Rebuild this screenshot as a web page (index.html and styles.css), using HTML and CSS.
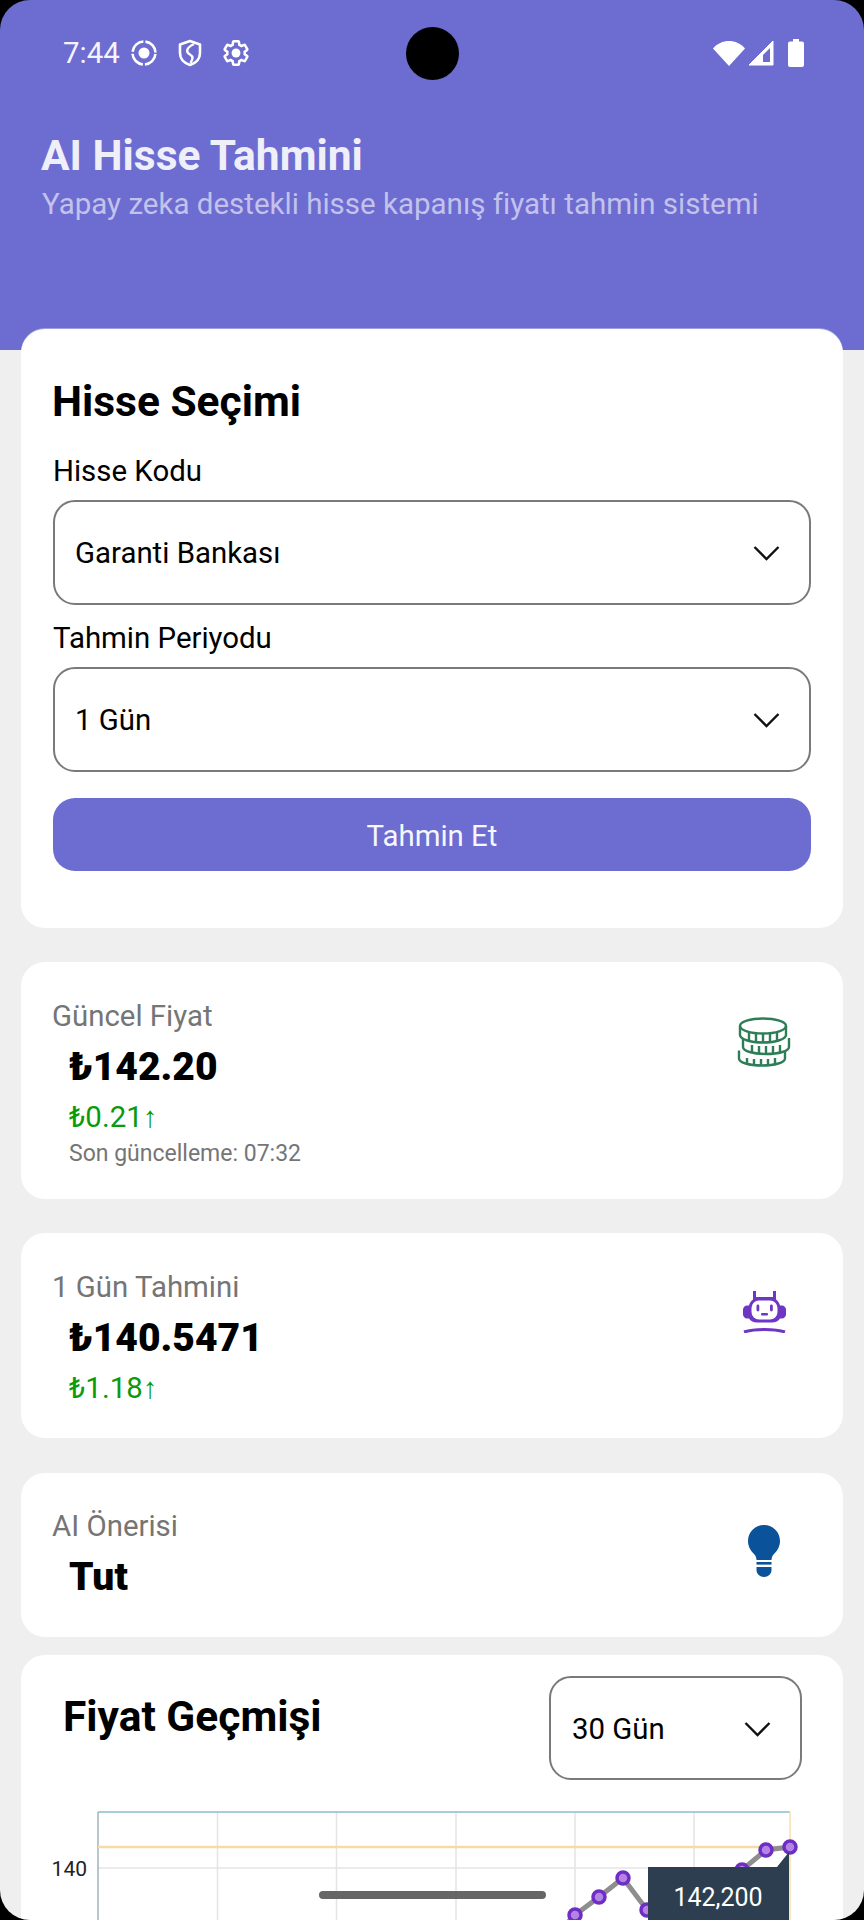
FILE: index.html
```html
<!DOCTYPE html>
<html lang="tr">
  <head>
    <meta charset="UTF-8" />
    <title>AI Hisse Tahmini</title>
    <link rel="stylesheet" href="styles.css">
  </head>
  <body>
    <div id="screen">
      <header class="top">
        <div class="status-bar">
          <div class="status-left">
            <span class="clock">7:44</span>
            <svg class="st-icon" viewBox="0 0 28 28"><circle cx="14" cy="14" r="5.500" fill="#fff"/><circle cx="14" cy="14" r="11.500" fill="none" stroke="#fff" stroke-width="2.600" stroke-dasharray="16 2.100" stroke-dashoffset="-1"/></svg>
            <svg class="st-icon shield" viewBox="0 0 28 28"><path d="M14 2 4 5.500V14c0 5.500 4 10 10 12 6-2 10-6.500 10-12V5.500z" fill="none" stroke="#fff" stroke-width="2.600" stroke-linejoin="round"/><path d="M18 5C10 9 9.500 13 14 15.500c3.500 2 3 4.500.5 8.500" fill="none" stroke="#fff" stroke-width="2.400"/></svg>
            <svg class="st-icon gear" viewBox="0 0 24 24"><path d="M19.430 12.980c.04-.32.07-.64.07-.98 0-.34-.03-.66-.07-.98l2.110-1.650c.19-.15.24-.42.12-.64l-2-3.460c-.09-.16-.26-.25-.44-.25-.06 0-.12.01-.17.03l-2.490 1c-.52-.4-1.080-.73-1.690-.98l-.38-2.650C14.460 2.180 14.250 2 14 2h-4c-.25 0-.46.18-.49.42l-.38 2.650c-.61.25-1.170.59-1.690.98l-2.490-1c-.06-.02-.12-.03-.18-.03-.17 0-.34.09-.43.25l-2 3.460c-.13.22-.07.49.12.64l2.110 1.650c-.04.32-.07.65-.07.98 0 .33.03.66.07.98l-2.110 1.650c-.19.15-.24.42-.12.64l2 3.460c.09.16.26.25.44.25.06 0 .12-.01.17-.03l2.490-1c.52.4 1.080.73 1.690.98l.38 2.650c.03.24.24.42.49.42h4c.25 0 .46-.18.49-.42l.38-2.650c.61-.25 1.170-.59 1.690-.98l2.490 1c.06.02.12.03.18.03.17 0 .34-.09.43-.25l2-3.460c.12-.22.07-.49-.12-.64l-2.110-1.650z" fill="none" stroke="#fff" stroke-width="2.200"/><circle cx="12" cy="12" r="3.800" fill="#fff"/></svg>
          </div>
          <div class="status-right">
            <svg class="wifi" viewBox="0 0 32 26"><path d="M0 8.500C4 3.500 10 1 16 1s12 2.500 16 7.500L16 26z" fill="#fff"/></svg>
            <svg class="signal" viewBox="0 0 26 26"><path d="M25 1v24H1z" fill="#fff" stroke="#fff" stroke-width="1" stroke-linejoin="round"/><path d="M15 15 22 8v14h-7z" fill="#6d6cd0"/></svg>
            <svg class="battery" viewBox="0 0 16 28"><path d="M5 0h6v2.500h3a2 2 0 0 1 2 2V26a2 2 0 0 1-2 2H2a2 2 0 0 1-2-2V4.500a2 2 0 0 1 2-2h3z" fill="#fff"/></svg>
          </div>
        </div>
        <h1 class="app-title">AI Hisse Tahmini</h1>
        <p class="app-sub">Yapay zeka destekli hisse kapanış fiyatı tahmin sistemi</p>
      </header>

      <main class="content">
        <section class="card form-card">
          <h2 class="card-title">Hisse Seçimi</h2>
          <label class="field-label first-label">Hisse Kodu</label>
          <div class="select">
            <span>Garanti Bankası</span>
            <svg class="chevron" viewBox="0 0 28 16"><path d="M2 2l12 12L26 2" fill="none" stroke="#111" stroke-width="2.400"/></svg>
          </div>
          <label class="field-label">Tahmin Periyodu</label>
          <div class="select">
            <span>1 Gün</span>
            <svg class="chevron" viewBox="0 0 28 16"><path d="M2 2l12 12L26 2" fill="none" stroke="#111" stroke-width="2.400"/></svg>
          </div>
          <button class="predict-btn">Tahmin Et</button>
        </section>

        <section class="card stat-card price-card">
          <div class="stat-text">
            <div class="stat-label">Güncel Fiyat</div>
            <div class="stat-value">₺142.20</div>
            <div class="stat-delta">₺0.21↑</div>
            <div class="stat-note">Son güncelleme: 07:32</div>
          </div>
          <svg class="stat-icon coins" viewBox="0 0 54 50" fill="none" stroke="#2e7d56" stroke-width="2.400">
            <path d="M2 33.500v8c0 4 10 7 23 7s23-3 23-7v-8" fill="#fff"/>
            <path d="M6 21v9c0 4 10 7 23 7s23-3 23-7v-9" fill="#fff"/>
            <ellipse cx="26" cy="9" rx="23" ry="7.500" fill="#fff"/>
            <path d="M3 9v9c0 4 10 7.500 23 7.500S49 22 49 18V9"/>
            <path d="M12 15.500v8M19 16.500v9M26 17v8.500M33 16.500v9M40 15.500v8M15 28v7M22 29v8M29 29v8M36 29v8M43 28v7M10 41v6M17 42v6M24 42v6M31 42v6M38 41v6"/>
          </svg>
        </section>

        <section class="card stat-card forecast-card">
          <div class="stat-text">
            <div class="stat-label">1 Gün Tahmini</div>
            <div class="stat-value">₺140.5471</div>
            <div class="stat-delta">₺1.18↑</div>
          </div>
          <svg class="stat-icon robot" viewBox="0 0 43 43">
            <path d="M10 1h3v6h17V1h3v8.500c2 1.500 3.500 3.500 4 6h2c2 0 4 2 4 4v5c0 2-2 4-4 4h-2c-1.500 2.500-4.500 4-8 4H14c-3.500 0-6.500-1.500-8-4H4c-2 0-4-2-4-4v-5c0-2 2-4 4-4h2c.5-2.500 2-4.500 4-6z" fill="#6f36c4"/>
            <rect x="8.500" y="10.500" width="26" height="19" rx="7.500" fill="#fff"/>
            <rect x="13.500" y="14.500" width="2.800" height="7" rx="1.400" fill="#6f36c4"/>
            <rect x="27" y="14.500" width="2.800" height="7" rx="1.400" fill="#6f36c4"/>
            <rect x="18" y="23" width="7" height="2.500" rx="1" fill="#6f36c4"/>
            <path d="M1 42c6-2 13-2.500 20.500-2.500S36 40 42 42" fill="none" stroke="#6f36c4" stroke-width="3"/>
          </svg>
        </section>

        <section class="card stat-card advice-card">
          <div class="stat-text">
            <div class="stat-label">AI Önerisi</div>
            <div class="stat-value">Tut</div>
          </div>
          <svg class="stat-icon bulb" viewBox="0 0 32 52" fill="#0a5299">
            <path d="M16 0C7 0 0 7 0 16c0 5.500 2.800 10 6 13 1.600 1.500 2.500 4 2.500 6h15c0-2 .9-4.500 2.500-6 3.200-3 6-7.500 6-13C32 7 25 0 16 0z"/>
            <rect x="8.500" y="37" width="15" height="2.600"/>
            <path d="M8.500 42h15v3c0 4-3.400 7-7.500 7s-7.500-3-7.500-7z"/>
          </svg>
        </section>

        <section class="card chart-card">
          <div class="chart-head">
            <h2 class="card-title">Fiyat Geçmişi</h2>
            <div class="select range-select">
              <span>30 Gün</span>
              <svg class="chevron" viewBox="0 0 28 16"><path d="M2 2l12 12L26 2" fill="none" stroke="#111" stroke-width="2.400"/></svg>
            </div>
          </div>
          <svg class="chart" viewBox="21 1800 822 120">
            <g stroke="#e4e4e4" stroke-width="1.500">
              <path d="M217.500 1812v110M336.500 1812v110M456 1812v110M575 1812v110M694 1812v110"/>
              <path d="M98 1868h692"/>
            </g>
            <path d="M98 1812v110" stroke="#9fb4bd" stroke-width="1.500"/>
            <path d="M98 1812h692" stroke="#8dbccb" stroke-width="1.500"/>
            <path d="M790 1812v110" stroke="#f6dfae" stroke-width="1.500"/>
            <path d="M98 1847h692" stroke="#f6dba6" stroke-width="2.500"/>
            <text class="axis-text" x="87" y="1876" text-anchor="end">140</text>
            <path d="M551 1940 575 1915 599 1897 623 1878 647 1910 700 1895 742 1870 766 1850 790 1847" fill="none" stroke="#8e8e8e" stroke-width="5"/>
            <g fill="#b184e6" stroke="#6f2dc4" stroke-width="3.500">
              <circle cx="575" cy="1915" r="6"/>
              <circle cx="599" cy="1897" r="6"/>
              <circle cx="623" cy="1878" r="6"/>
              <circle cx="647" cy="1910" r="6"/>
              <circle cx="742" cy="1870" r="6"/>
              <circle cx="766" cy="1850" r="6"/>
              <circle cx="790" cy="1847" r="6"/>
            </g>
            <path d="M648 1867H777L789 1852V1930H648z" fill="#2c3e50"/>
            <text class="tip-text" x="718" y="1906" text-anchor="middle">142,200</text>
          </svg>
        </section>
      </main>

      <div class="camera"></div>
      <div class="home-bar"></div>
      <div class="corners"></div>
    </div>
  </body>
</html>
```

FILE: styles.css
```css
* {
  box-sizing: border-box;
}
html,
body {
  margin: 0;
  padding: 0;
}
body {
  font-family: Roboto, "Noto Sans", sans-serif;
  background-color: #efefef;
  color: #000;
}
#screen {
  position: relative;
  width: 864px;
  height: 1920px;
  overflow: hidden;
  background-color: #efefef;
}

/* header */
.top {
  height: 350px;
  background-color: #6d6cd0;
  padding: 0 42px;
  color: #fff;
}
.status-bar {
  display: flex;
  justify-content: space-between;
  align-items: center;
  height: 106px;
  padding: 0 21px;
}
.status-left {
  display: flex;
  align-items: center;
}
.clock {
  font-size: 29.400px;
  color: #f4f4fb;
  margin-right: 10px;
}
.st-icon {
  width: 28px;
  height: 28px;
  margin-right: 18px;
}
.status-right {
  display: flex;
  align-items: center;
  gap: 5px;
  margin-right: -3px;
}
.wifi {
  width: 32px;
  height: 26px;
  margin-right: -2px;
}
.signal {
  width: 26px;
  height: 26px;
}
.battery {
  width: 16px;
  height: 28px;
  margin-left: 9px;
}
.app-title {
  margin: 24px 0 0 -1px;
  font-size: 42.500px;
  line-height: 52px;
  font-weight: 700;
  color: #efeffa;
}
.app-sub {
  margin: 4px 0 0;
  font-size: 29.500px;
  line-height: 36px;
  color: #c2c2ec;
}

/* cards */
.content {
  margin-top: -21px;
  padding: 0 21px;
  display: flex;
  flex-direction: column;
}
.card {
  background-color: #fff;
  border-radius: 24px;
}
.card-title {
  margin: 0 0 0 -1px;
  font-size: 42.500px;
  line-height: 50px;
  font-weight: 700;
}
.form-card {
  height: 599px;
  padding: 48px 32px 0;
  margin-bottom: 34px;
  box-shadow: 0 -1px 0 rgba(255, 255, 255, 0.35);
}
.field-label {
  display: block;
  margin-top: 12px;
  font-size: 29.400px;
  line-height: 36px;
}
.first-label {
  margin-top: 26px;
}
.select {
  display: flex;
  justify-content: space-between;
  align-items: center;
  height: 105px;
  margin-top: 11px;
  padding: 0 28px 0 20px;
  border: 2px solid #7a7a7a;
  border-radius: 22px;
  font-size: 29.400px;
  margin-bottom: 15px;
}
.chevron {
  width: 29px;
  height: 16px;
}
.predict-btn {
  display: block;
  width: 100%;
  height: 73px;
  margin-top: 26px;
  padding-top: 3px;
  border: none;
  border-radius: 22px;
  background-color: #6d6cd0;
  color: #f6f6fd;
  font-family: inherit;
  font-size: 29.400px;
}
.stat-card {
  display: flex;
  justify-content: space-between;
  padding: 36px 32px 0;
}
.price-card {
  height: 237px;
  margin-bottom: 34px;
}
.forecast-card {
  height: 205px;
  margin-bottom: 35px;
}
.advice-card {
  height: 164px;
  margin-bottom: 18px;
  padding-top: 35px;
}
.stat-label {
  font-size: 29.400px;
  line-height: 36px;
  color: #757575;
  margin-left: -1px;
}
.stat-value {
  margin: 8px 0 0 16px;
  font-size: 39px;
  line-height: 50px;
  font-weight: 900;
}
.stat-delta {
  margin: 7px 0 0 16px;
  font-size: 29.400px;
  line-height: 36px;
  color: #0a9a0a;
}
.stat-note {
  margin: 4px 0 0 16px;
  font-size: 23px;
  line-height: 30px;
  color: #757575;
}
.coins {
  width: 54px;
  height: 50px;
  margin: 19px 20px 0 0;
}
.robot {
  width: 43px;
  height: 43px;
  margin: 21px 25px 0 0;
}
.bulb {
  width: 32px;
  height: 52px;
  margin: 17px 31px 0 0;
}

/* chart */
.chart-card {
  height: 300px;
}
.chart-head {
  display: flex;
  justify-content: space-between;
  padding: 21px 41px 0 43px;
}
.chart-head .card-title {
  margin-top: 16px;
}
.range-select {
  width: 253px;
  margin: 0;
  height: 104px;
  padding: 2px 28px 0 21px;
}
.chart {
  display: block;
  width: 822px;
  height: 120px;
  margin-top: 20px;
  overflow: hidden;
}
.axis-text {
  font-size: 21px;
  fill: #222;
}
.tip-text {
  font-size: 25px;
  fill: #fff;
}

/* overlays */
.camera {
  position: absolute;
  left: 406px;
  top: 27px;
  width: 53px;
  height: 53px;
  border-radius: 50%;
  background-color: #000;
}
.home-bar {
  position: absolute;
  left: 319px;
  top: 1891px;
  width: 227px;
  height: 8px;
  border-radius: 4px;
  background-color: #666;
}
.corners {
  position: absolute;
  inset: 0;
  border-radius: 30px;
  box-shadow: 0 0 0 40px #000;
  pointer-events: none;
}
```
